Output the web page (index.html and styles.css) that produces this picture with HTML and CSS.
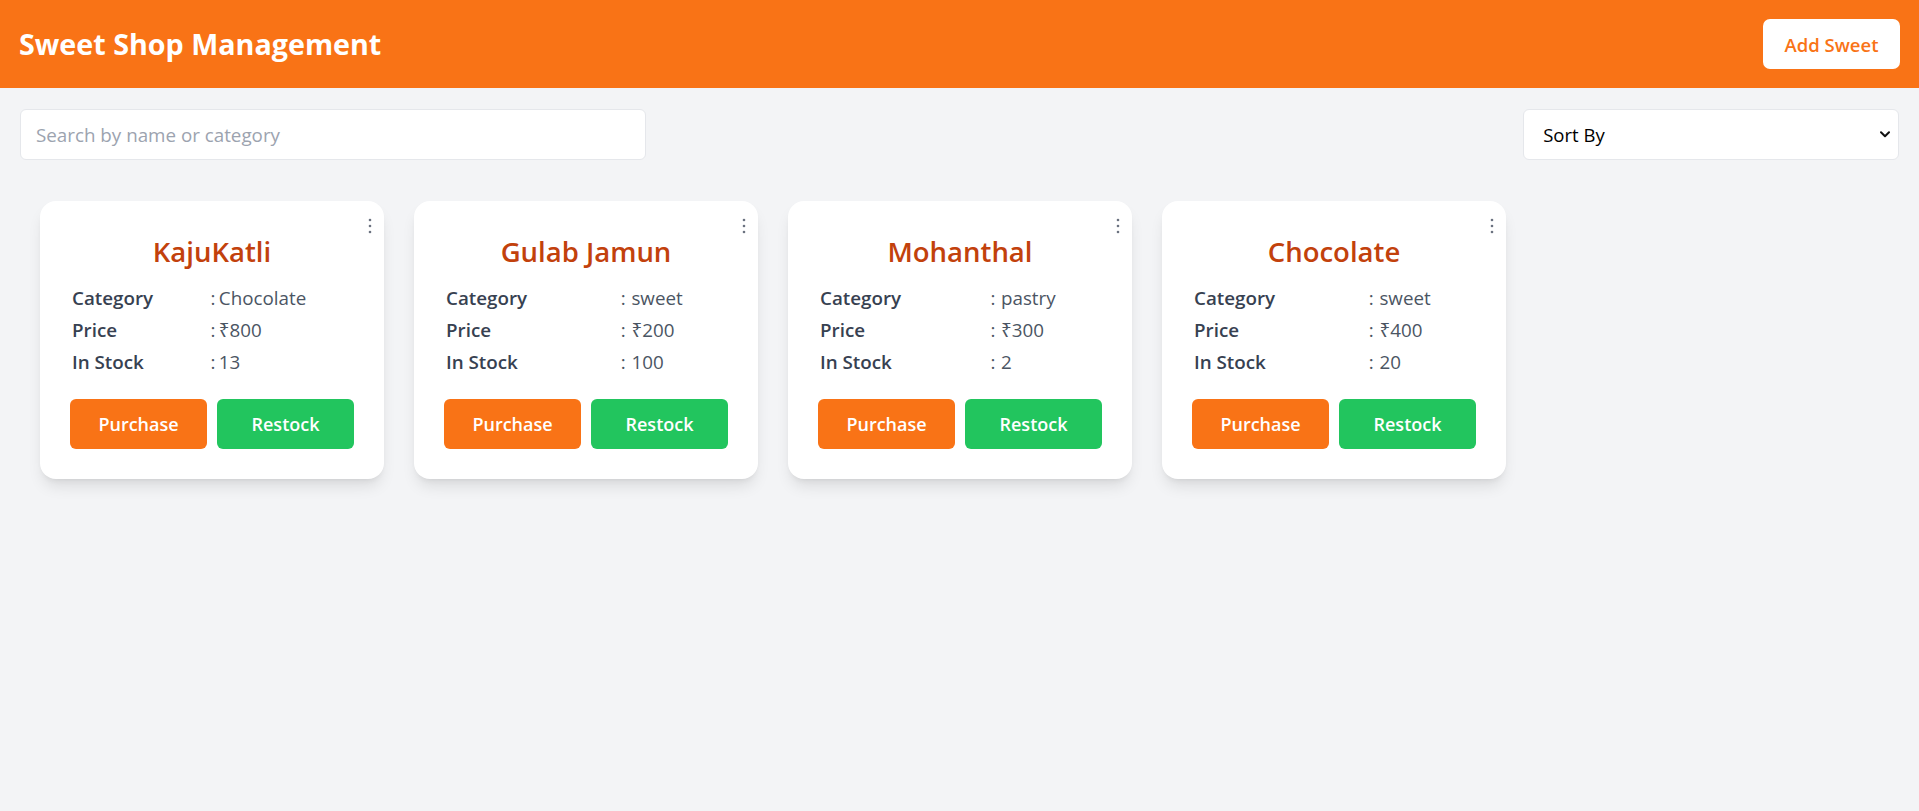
FILE: index.html
```html
<!DOCTYPE html>
<html lang="en">
<head>
<meta charset="utf-8">
<title>Sweet Shop Management</title>
<link rel="stylesheet" href="styles.css">
</head>
<body>
<header class="topbar">
  <h1 class="brand">Sweet Shop Management</h1>
  <button class="add-btn">Add Sweet</button>
</header>

<main class="page">
  <div class="toolbar">
    <input class="search" type="text" placeholder="Search by name or category">
    <div class="sort-wrap">
      <select class="sort">
        <option>Sort By</option>
      </select>
      <svg class="chev" width="10" height="7" viewBox="0 0 10 7"><path d="M1 1.2 L5 5.2 L9 1.2" fill="none" stroke="#111" stroke-width="2" stroke-linecap="round" stroke-linejoin="round"/></svg>
    </div>
  </div>

  <section class="cards">
    <article class="card">
      <svg class="menu" width="4" height="16" viewBox="0 0 4 16"><circle cx="2" cy="2" r="1.3"/><circle cx="2" cy="8" r="1.3"/><circle cx="2" cy="14" r="1.3"/></svg>
      <h2 class="name">KajuKatli</h2>
      <table class="info">
        <tr><td class="lbl">Category</td><td class="col">:</td><td class="val">Chocolate</td></tr>
        <tr><td class="lbl">Price</td><td class="col">:</td><td class="val">₹800</td></tr>
        <tr><td class="lbl">In Stock</td><td class="col">:</td><td class="val">13</td></tr>
      </table>
      <div class="actions">
        <button class="btn purchase">Purchase</button>
        <button class="btn restock">Restock</button>
      </div>
    </article>

    <article class="card">
      <svg class="menu" width="4" height="16" viewBox="0 0 4 16"><circle cx="2" cy="2" r="1.3"/><circle cx="2" cy="8" r="1.3"/><circle cx="2" cy="14" r="1.3"/></svg>
      <h2 class="name">Gulab Jamun</h2>
      <table class="info">
        <tr><td class="lbl">Category</td><td class="col">:</td><td class="val">sweet</td></tr>
        <tr><td class="lbl">Price</td><td class="col">:</td><td class="val">₹200</td></tr>
        <tr><td class="lbl">In Stock</td><td class="col">:</td><td class="val">100</td></tr>
      </table>
      <div class="actions">
        <button class="btn purchase">Purchase</button>
        <button class="btn restock">Restock</button>
      </div>
    </article>

    <article class="card">
      <svg class="menu" width="4" height="16" viewBox="0 0 4 16"><circle cx="2" cy="2" r="1.3"/><circle cx="2" cy="8" r="1.3"/><circle cx="2" cy="14" r="1.3"/></svg>
      <h2 class="name">Mohanthal</h2>
      <table class="info">
        <tr><td class="lbl">Category</td><td class="col">:</td><td class="val">pastry</td></tr>
        <tr><td class="lbl">Price</td><td class="col">:</td><td class="val">₹300</td></tr>
        <tr><td class="lbl">In Stock</td><td class="col">:</td><td class="val">2</td></tr>
      </table>
      <div class="actions">
        <button class="btn purchase">Purchase</button>
        <button class="btn restock">Restock</button>
      </div>
    </article>

    <article class="card">
      <svg class="menu" width="4" height="16" viewBox="0 0 4 16"><circle cx="2" cy="2" r="1.3"/><circle cx="2" cy="8" r="1.3"/><circle cx="2" cy="14" r="1.3"/></svg>
      <h2 class="name">Chocolate</h2>
      <table class="info">
        <tr><td class="lbl">Category</td><td class="col">:</td><td class="val">sweet</td></tr>
        <tr><td class="lbl">Price</td><td class="col">:</td><td class="val">₹400</td></tr>
        <tr><td class="lbl">In Stock</td><td class="col">:</td><td class="val">20</td></tr>
      </table>
      <div class="actions">
        <button class="btn purchase">Purchase</button>
        <button class="btn restock">Restock</button>
      </div>
    </article>
  </section>
</main>
</body>
</html>
```
FILE: styles.css
```css
* { box-sizing: border-box; }

body {
  margin: 0;
  background: #f3f4f6;
  font-family: "Open Sans", "Noto Sans", sans-serif;
  min-height: 811px;
}

.topbar {
  height: 88px;
  background: #f97316;
  display: flex;
  align-items: center;
  justify-content: space-between;
  padding: 0 19px 0 19px;
}

.brand {
  margin: 0;
  color: #fff;
  font-size: 28.7px;
  font-weight: 700;
  line-height: 36px;
}

.add-btn {
  height: 50px;
  width: 137px;
  border: none;
  border-radius: 7px;
  background: #fff;
  color: #f97316;
  font-family: inherit;
  font-size: 18.5px;
  font-weight: 600;
  padding: 0;
}

.page {
  padding: 21px 20px 20px 20px;
}

.toolbar {
  display: flex;
  justify-content: space-between;
  align-items: center;
}

.search {
  width: 33.3333%;
  height: 51px;
  border: 1px solid #e5e7eb;
  border-radius: 6px;
  background: #fff;
  padding: 0 15px;
  font-family: inherit;
  font-size: 18.8px;
  color: #111827;
  outline: none;
}
.search::placeholder { color: #9ca3af; }

.sort-wrap {
  position: relative;
  width: 20%;
}

.sort {
  appearance: none;
  -webkit-appearance: none;
  width: 100%;
  height: 51px;
  border: 1px solid #e5e7eb;
  border-radius: 6px;
  background: #fff;
  padding: 0 19px;
  font-family: inherit;
  font-size: 18.5px;
  color: #000;
  outline: none;
}

.chev {
  position: absolute;
  right: 9px;
  top: 22px;
  pointer-events: none;
}

.cards {
  display: flex;
  flex-wrap: wrap;
  gap: 30px;
  padding: 41px 20px 0 20px;
}

.card {
  position: relative;
  width: 344px;
  background: #fff;
  border-radius: 16px;
  padding: 30px;
  box-shadow: 0 10px 15px -3px rgba(0,0,0,0.10), 0 4px 6px -4px rgba(0,0,0,0.10);
}

.menu {
  position: absolute;
  top: 17px;
  right: 12px;
  fill: #6b7280;
}

.name {
  margin: 3px 0 0 0;
  text-align: center;
  color: #c2410c;
  font-size: 27.5px;
  font-weight: 600;
  line-height: 36px;
}

.info {
  width: 296px;
  margin: 12px 0 0 2px;
  border-collapse: collapse;
  font-size: 18.8px;
  line-height: 28px;
}

.info td {
  padding: 2px 0;
  white-space: nowrap;
}

.lbl {
  color: #374151;
  font-weight: 600;
}

.col, .val {
  color: #4b5563;
}

.actions {
  display: flex;
  gap: 10px;
  margin-top: 21px;
}

.btn {
  flex: 1;
  height: 50px;
  border: none;
  border-radius: 6px;
  color: #fff;
  font-family: inherit;
  font-size: 18px;
  font-weight: 600;
  padding: 0;
}

.purchase { background: #f97316; }
.restock { background: #22c55e; }
```
